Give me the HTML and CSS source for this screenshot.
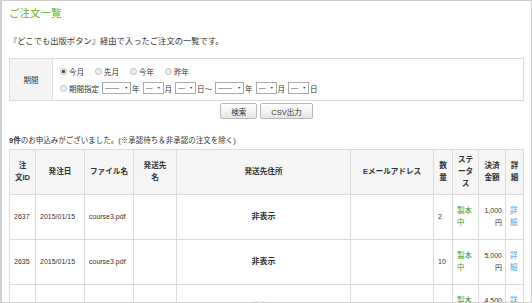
FILE: index.html
```html
<!DOCTYPE html>
<html lang="ja">
<head>
    <meta charset="UTF-8">
    <title>ご注文一覧</title>
    <link rel="stylesheet" href="styles.css">
</head>
<body>
    <div class="frame">
        <h1 class="title">ご注文一覧</h1>
        <p class="lead">『どこでも出版ボタン』経由で入ったご注文の一覧です。</p>
        <form class="search" onsubmit="return false">
            <table class="cond">
                <tr>
                    <th>期間</th>
                    <td>
                        <div class="line">
                            <label class="opt"><input type="radio" name="period" checked>今月</label>
                            <label class="opt"><input type="radio" name="period">先月</label>
                            <label class="opt"><input type="radio" name="period">今年</label>
                            <label class="opt"><input type="radio" name="period">昨年</label>
                        </div>
                        <div class="line">
                            <label class="opt"><input type="radio" name="period">期間指定</label>
                            <span class="sel year"><select><option>——</option></select></span><span class="unit">年</span>
                            <span class="sel"><select><option>—</option></select></span><span class="unit">月</span>
                            <span class="sel"><select><option>—</option></select></span><span class="unit">日～</span>
                            <span class="sel year"><select><option>——</option></select></span><span class="unit">年</span>
                            <span class="sel"><select><option>—</option></select></span><span class="unit">月</span>
                            <span class="sel"><select><option>—</option></select></span><span class="unit">日</span>
                        </div>
                    </td>
                </tr>
            </table>
            <div class="btns">
                <button class="btn">検索</button>
                <button class="btn">CSV出力</button>
            </div>
        </form>
        <p class="count"><b>9件</b>のお申込みがございました。(※承認待ち＆非承認の注文を除く)</p>
        <table class="orders">
            <colgroup>
                <col style="width:26px"><col style="width:49px"><col style="width:49px"><col style="width:43px"><col style="width:174px">
                <col style="width:83px"><col style="width:19px"><col style="width:26px"><col style="width:27px"><col style="width:18px">
            </colgroup>
            <tr>
                <th>注<br>文ID</th>
                <th>発注日</th>
                <th>ファイル名</th>
                <th>発送先<br>名</th>
                <th>発送先住所</th>
                <th>Eメールアドレス</th>
                <th>数<br>量</th>
                <th>ステ<br>ータ<br>ス</th>
                <th>決済<br>金額</th>
                <th>詳<br>細</th>
            </tr>
            <tr>
                <td>2637</td>
                <td>2015/01/15</td>
                <td>course3.pdf</td>
                <td></td>
                <td class="hidden">非表示</td>
                <td></td>
                <td>2</td>
                <td class="status">製本中</td>
                <td class="price">1,000円</td>
                <td><a href="#" class="detail">詳細</a></td>
            </tr>
            <tr>
                <td>2635</td>
                <td>2015/01/15</td>
                <td>course3.pdf</td>
                <td></td>
                <td class="hidden">非表示</td>
                <td></td>
                <td>10</td>
                <td class="status">製本中</td>
                <td class="price">5,000円</td>
                <td><a href="#" class="detail">詳細</a></td>
            </tr>
            <tr>
                <td>2634</td>
                <td>2015/01/14</td>
                <td>course3.pdf</td>
                <td></td>
                <td class="hidden">非表示</td>
                <td></td>
                <td>9</td>
                <td class="status">製本中</td>
                <td class="price">4,500円</td>
                <td><a href="#" class="detail">詳細</a></td>
            </tr>
        </table>
    </div>
</body>
</html>
```

FILE: styles.css
```css
html, body {margin: 0; padding: 0; background: #fff;}
body {font-family: "Liberation Sans", "Noto Sans CJK JP", sans-serif; color: #333; font-size: 7.5px;}
.frame {height: 303px; box-sizing: border-box; border: 1px solid #cfcfcf; border-left-width: 2px; overflow: hidden; padding: 0 7px 0 7px;}
.title {margin: 5px 0 0; font-size: 10.5px; line-height: 14px; font-weight: normal; color: #62b133;}
.lead {margin: 15px 0 0; font-size: 8.3px; line-height: 12px;}

/* 検索条件 */
.search {margin: 11px 0 0;}
.cond {width: 100%; border-collapse: collapse; border: 1px solid #dcdcdc;}
.cond th {width: 42px; background: #f4f4f4; border-right: 1px solid #dcdcdc; font-weight: normal; font-size: 7.5px; padding: 0;}
.cond td {padding: 5px 7px 5px 7px;}
.line {display: flex; align-items: center; height: 14px; white-space: nowrap;}
.line + .line {margin-top: 3px;}
.opt {display: inline-flex; align-items: center; margin-right: 11px;}
.line + .line .opt {margin-right: 3px;}
.opt input {appearance: none; -webkit-appearance: none; width: 7px; height: 7px; margin: 0 2px 0 0; border: 1px solid #bdbdbd; border-radius: 50%; background: #efefef; box-sizing: border-box;}
.opt input:checked {background: radial-gradient(circle, #444 0, #444 1.3px, #efefef 1.8px);}
.sel {position: relative; display: inline-block; height: 12px;}
.sel select {appearance: none; -webkit-appearance: none; width: 21px; height: 12px; margin: 0; padding: 0 0 0 2px; border: 1px solid #ababab; border-radius: 0; background: #fff; color: #555; font-family: inherit; font-size: 7px; line-height: 10px; display: block;}
.sel.year select {width: 29px;}
.sel::after {content: "▼"; position: absolute; right: 3px; top: 4px; font-size: 3.5px; line-height: 4px; color: #333; pointer-events: none;}
.unit {margin: 0 3px 0 1px;}
.btns {display: flex; justify-content: center; gap: 3px; margin-top: 2px;}
.btn {height: 16px; padding: 0 10px; font-family: inherit; font-size: 7.5px; color: #333; border: 1px solid #b9b9b9; border-radius: 2px; background: linear-gradient(#ffffff, #e6e6e6); cursor: pointer;}

.count {margin: 16px 0 0; line-height: 12px; font-size: 7.5px;}
.count b {font-weight: bold;}

/* 注文一覧 */
.orders {width: 514px; table-layout: fixed; border-collapse: collapse; margin-top: 2px;}
.orders th, .orders td {border: 1px solid #dcdcdc; line-height: 12px;}
.orders th {height: 45px; padding: 0; background: #f5f5f5; font-size: 7.6px; font-weight: bold; text-align: center; white-space: nowrap; box-sizing: border-box;}
.orders td {height: 45px; padding: 0 4px; font-size: 7px; text-align: left; box-sizing: border-box;}
.orders td.hidden {text-align: center; font-weight: bold; font-size: 8px;}
.orders td.status {color: #3f9b2a; font-size: 7.5px; padding: 0 4px;}
.orders td.price {text-align: right; padding: 0 3px;}
.detail {color: #4ea3da; text-decoration: none; font-size: 7.5px;}
```
